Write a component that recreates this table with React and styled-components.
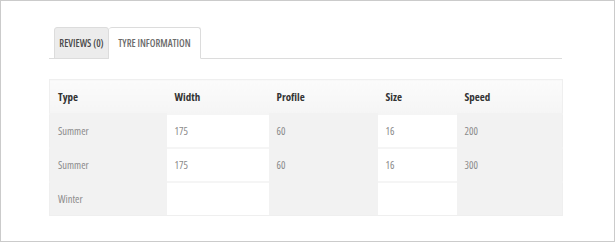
import styled, { createGlobalStyle } from "styled-components";

const GlobalStyle = createGlobalStyle`
  body {
    margin: 0;
    font-family: "Open Sans", "Liberation Sans", sans-serif;
    font-stretch: 75%;
  }
`;

const Frame = styled.div`
  box-sizing: border-box;
  width: 615px;
  height: 242px;
  border: 1px solid #cbcbcb;
  padding: 26px 52px 0 48px;
  background: #fff;
`;

const TabBar = styled.div`
  display: flex;
  align-items: flex-end;
  height: 31px;
  padding-left: 5px;
  border-bottom: 1px solid #dcdcdc;
`;

const Tab = styled.div`
  box-sizing: border-box;
  height: 32px;
  margin-bottom: -1px;
  width: ${(p) => p.$width}px;
  display: flex;
  align-items: center;
  justify-content: center;
  font-size: 10px;
  font-weight: 600;
  text-transform: uppercase;
  border: 1px solid #dcdcdc;
  border-radius: 3px 3px 0 0;
  color: ${(p) => (p.$active ? "#6b6b6b" : "#4a4a4a")};
  background: ${(p) => (p.$active ? "#fff" : "#ececec")};
  border-bottom-color: ${(p) => (p.$active ? "#fff" : "#dcdcdc")};
  ${(p) => (p.$active ? "border-left: none;" : "")}
`;

const Table = styled.table`
  margin-top: 20px;
  width: 513px;
  border-collapse: collapse;
  table-layout: fixed;
  border: 1px solid #efefef;
`;

const HeadCell = styled.th`
  height: 33px;
  padding: 0 0 0 8px;
  text-align: left;
  font-size: 11px;
  font-weight: 700;
  color: #333;
  background: linear-gradient(#fbfbfb, #f5f5f5);
  border-bottom: 1px solid #ececec;
`;

const Cell = styled.td`
  height: 32px;
  padding: 0 0 0 8px;
  font-size: 10.5px;
  color: #8a8a8a;
  background: ${(p) => (p.$shade ? "#f2f2f2" : "#fff")};
  border-top: 2px solid ${(p) => (p.$shade ? "#f2f2f2" : "#f5f5f5")};
`;

const columns = [
  { name: "Type", width: 117 },
  { name: "Width", width: 102 },
  { name: "Profile", width: 109 },
  { name: "Size", width: 79 },
  { name: "Speed", width: 106 },
];

const rows = [
  ["Summer", "175", "60", "16", "200"],
  ["Summer", "175", "60", "16", "300"],
  ["Winter", "", "", "", ""],
];

const App = () => {
  return (
    <Frame>
      <GlobalStyle />
      <TabBar>
        <Tab $width={55}>Reviews (0)</Tab>
        <Tab $width={92} $active>
          Tyre Information
        </Tab>
      </TabBar>
      <Table>
        <colgroup>
          {columns.map((c) => (
            <col key={c.name} style={{ width: c.width }} />
          ))}
        </colgroup>
        <thead>
          <tr>
            {columns.map((c) => (
              <HeadCell key={c.name}>{c.name}</HeadCell>
            ))}
          </tr>
        </thead>
        <tbody>
          {rows.map((r, i) => (
            <tr key={i}>
              {r.map((v, j) => (
                <Cell key={j} $shade={j % 2 === 0}>
                  {v}
                </Cell>
              ))}
            </tr>
          ))}
        </tbody>
      </Table>
    </Frame>
  );
};

export default App;
